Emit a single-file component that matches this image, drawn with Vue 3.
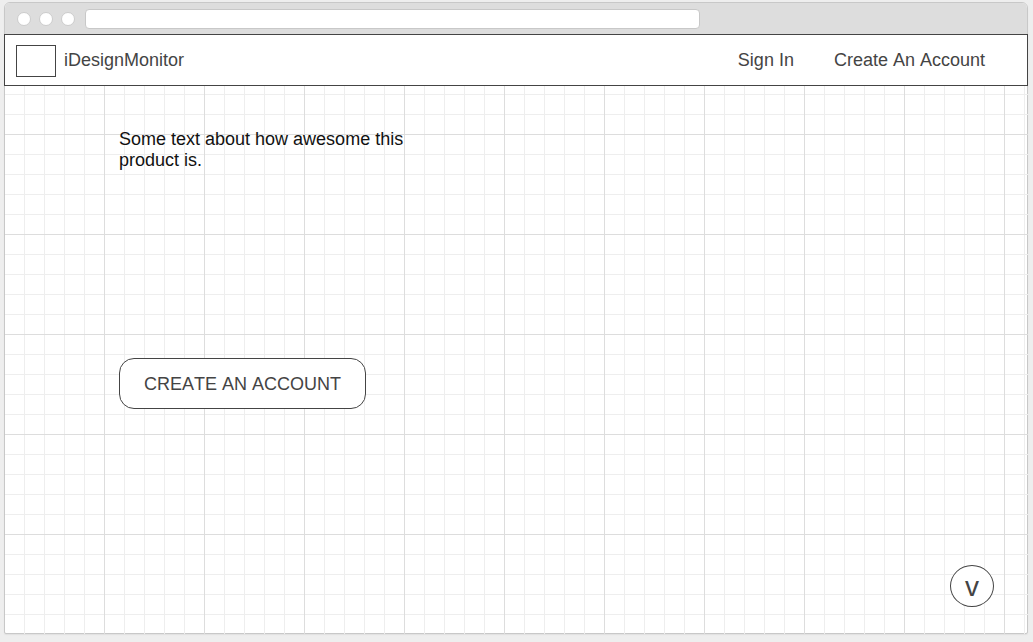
<script setup>
const dots = 3
const links = ['Sign In', 'Create An Account']
</script>

<template>
  <div class="desk">
    <div class="window">
      <div class="chrome">
        <span v-for="n in dots" :key="n" class="dot"></span>
        <input class="address" type="text" aria-label="Address" />
      </div>
      <div class="page">
        <header class="nav">
          <div class="brand">
            <span class="logo"></span>
            <span>iDesignMonitor</span>
          </div>
          <nav class="links">
            <a v-for="link in links" :key="link" href="#">{{ link }}</a>
          </nav>
        </header>
        <main class="hero">
          <p class="pitch">Some text about how awesome this product is.</p>
          <button class="cta" type="button">CREATE AN ACCOUNT</button>
          <button class="down" type="button">v</button>
        </main>
      </div>
    </div>
  </div>
</template>

<style>
body {
  background: #eee;
}
</style>

<style scoped>
.desk {
  box-sizing: border-box;
  display: flex;
  min-height: 100vh;
  padding: 2px 5px 8px 4px;
  font-family: "Liberation Sans", Arial, sans-serif;
  font-size: 18px;
  line-height: 21px;
  font-kerning: none;
  color: #444;
}
.window {
  flex: 1;
  display: flex;
  flex-direction: column;
  border: 1px solid #c8c8c8;
  border-radius: 6px 6px 2px 2px;
  background: #fff;
  box-shadow: 0 1px 1px #e0e0e0;
}
.chrome {
  box-sizing: border-box;
  display: flex;
  align-items: center;
  gap: 8px;
  height: 31px;
  padding: 0 12px;
  background: #ddd;
  border-radius: 5px 5px 0 0;
}
.dot {
  box-sizing: border-box;
  width: 14px;
  height: 14px;
  border: 1px solid #ccc;
  border-radius: 50%;
  background: #fff;
}
.address {
  box-sizing: border-box;
  flex: 0 1 615px;
  min-width: 0;
  height: 20px;
  margin: 0 0 0 2px;
  padding: 0 6px;
  border: 1px solid #c8c8c8;
  border-radius: 4px;
  background: #fff;
}
.page {
  flex: 1;
  display: flex;
  flex-direction: column;
  margin: 0 -1px -1px 0;
  background-image:
    linear-gradient(to right, transparent 99px, #ddd 99px),
    linear-gradient(to bottom, transparent 99px, #ddd 99px),
    linear-gradient(to right, transparent 19px, #eee 19px),
    linear-gradient(to bottom, transparent 19px, #eee 19px);
  background-size: 100px 100px, 100px 100px, 20px 20px, 20px 20px;
  background-position: 0 1px;
}
.nav {
  box-sizing: border-box;
  display: flex;
  align-items: center;
  justify-content: space-between;
  height: 52px;
  margin-left: -1px;
  padding: 1px 42px 0 11px;
  border: 1px solid #444;
  background: #fff;
}
.brand {
  display: flex;
  align-items: center;
  gap: 8px;
}
.logo {
  box-sizing: border-box;
  width: 40px;
  height: 32px;
  border: 1px solid #444;
}
.links {
  display: flex;
  gap: 40px;
}
.links a {
  color: inherit;
  text-decoration: none;
}
.hero {
  flex: 1;
  display: flex;
  flex-direction: column;
  align-items: flex-start;
  padding: 43px 34px 27px 114px;
}
.pitch {
  width: 300px;
  min-height: 42px;
  margin: 0 0 187px;
  color: #111;
}
.cta,
.down {
  border: 1px solid #444;
  background: #fff;
  font: inherit;
  font-kerning: none;
  color: inherit;
}
.cta {
  min-width: 247px;
  height: 51px;
  padding: 2px 16px 0;
  border-radius: 15px;
}
.down {
  width: 44px;
  height: 42px;
  margin-top: auto;
  margin-left: auto;
  padding: 2px 0 0;
  border-radius: 50%;
  font-size: 28px;
  line-height: 32px;
}
</style>
